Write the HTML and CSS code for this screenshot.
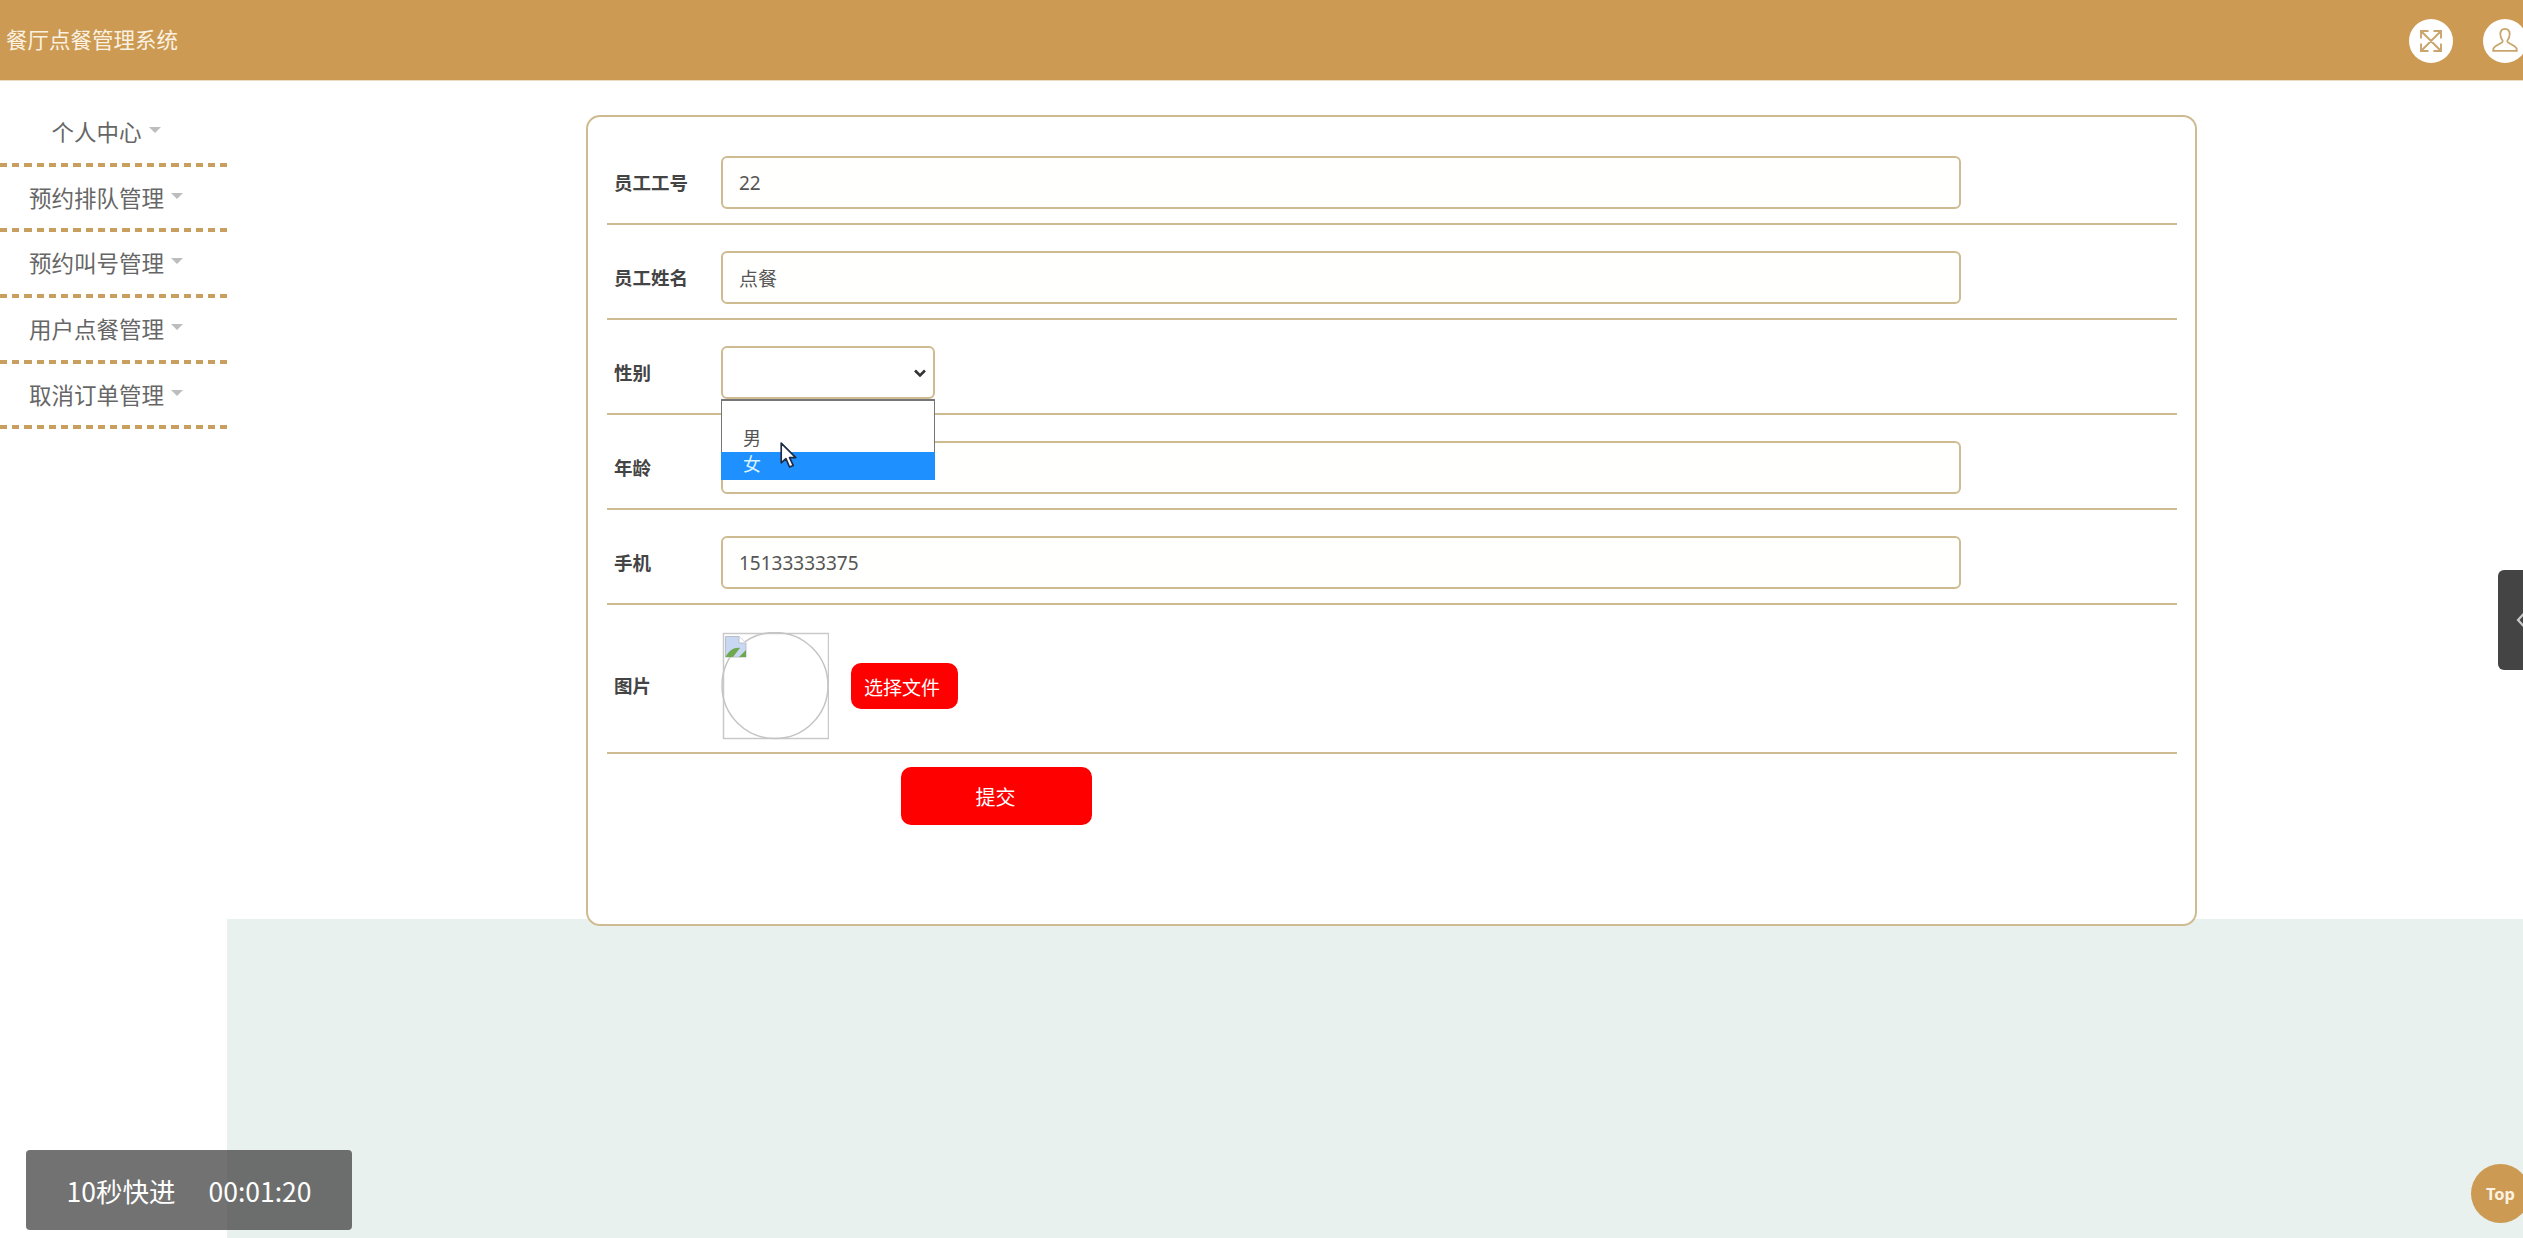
FILE: index.html
```html
<!DOCTYPE html>
<html lang="zh-CN">
<head>
<meta charset="utf-8">
<title>餐厅点餐管理系统</title>
<link rel="stylesheet" href="styles.css">
</head>
<body>
<header class="topbar">
  <div class="brand">餐厅点餐管理系统</div>
  <div class="top-actions">
    <span class="round-btn">
      <svg class="icon-expand" viewBox="0 0 24 24" fill="none" stroke="#c9a46c" stroke-width="1.500">
        <path d="M4 4 20 20M20 4 4 20M4 10V4H10M14 4H20V10M20 14V20H14M10 20H4V14"/>
      </svg>
    </span>
    <span class="round-btn">
      <svg class="icon-user" viewBox="0 0 24 24" fill="none" stroke="#c9a46c" stroke-width="1.500">
        <path d="M12 1.500C9.300 1.500 8 3.500 8 6.300C8 8.800 9 10.300 9.800 11.300C10.300 12 10 13 9 13.600L3.800 16.600C2.500 17.400 1.800 18.400 1.800 20.500H22.200C22.200 18.400 21.500 17.400 20.200 16.600L15 13.600C14 13 13.700 12 14.200 11.300C15 10.300 16 8.800 16 6.300C16 3.500 14.700 1.500 12 1.500Z"/>
      </svg>
    </span>
  </div>
</header>

<div class="layout">
  <nav class="sidebar">
    <div class="nav-item"><span>个人中心</span><i class="caret"></i></div>
    <div class="nav-item"><span>预约排队管理</span><i class="caret"></i></div>
    <div class="nav-item"><span>预约叫号管理</span><i class="caret"></i></div>
    <div class="nav-item"><span>用户点餐管理</span><i class="caret"></i></div>
    <div class="nav-item"><span>取消订单管理</span><i class="caret"></i></div>
  </nav>

  <main class="content">
    <form class="card">
      <div class="row">
        <label class="label">员工工号</label>
        <input class="field" type="text" value="22">
      </div>
      <div class="row">
        <label class="label">员工姓名</label>
        <input class="field" type="text" value="点餐">
      </div>
      <div class="row">
        <label class="label">性别</label>
        <div class="select-wrap">
          <select class="select"><option></option><option>男</option><option>女</option></select>
          <div class="dropdown">
            <div class="opt"></div>
            <div class="opt">男</div>
            <div class="opt opt-active">女</div>
            <svg class="cursor" viewBox="0 0 16 25">
              <path d="M1 1V20L5.500 16L9 24L12.500 22.500L9 15H15Z" fill="#fff" stroke="#1d2a44" stroke-width="1.600" stroke-linejoin="round"/>
            </svg>
          </div>
        </div>
      </div>
      <div class="row">
        <label class="label">年龄</label>
        <input class="field" type="text" value="">
      </div>
      <div class="row">
        <label class="label">手机</label>
        <input class="field" type="text" value="15133333375">
      </div>
      <div class="row row-photo">
        <label class="label">图片</label>
        <div class="photo">
          <svg class="photo-art" viewBox="0 0 108 108" fill="none">
            <rect x="2.500" y="1.500" width="105" height="105" stroke="#c9c9c9" stroke-width="1.500"/>
            <circle cx="54" cy="53.500" r="53" stroke="#c4c4c4" stroke-width="1.500"/>
            <path d="M4.500 4.500H18L25 11V25H4.500Z" fill="#c9d8f2" stroke="#b9bfc9"/>
            <path d="M18 4.500V11H25" fill="#fff" stroke="#b9bfc9"/>
            <path d="M4.500 25C8 18 14 15 19 16L12 25Z" fill="#6fa84f"/>
            <path d="M18 25 25 18V25Z" fill="#6fa84f"/>
          </svg>
        </div>
        <button class="pick" type="button">选择文件</button>
      </div>
      <button class="submit" type="button">提交</button>
    </form>
  </main>
</div>

<div class="speed-tag"><span>10秒快进</span><span>00:01:20</span></div>
<div class="side-handle">
  <svg class="side-arrow" viewBox="0 0 8 16" fill="none" stroke="#c9c9c9" stroke-width="2.200"><path d="M7 2 1.500 8 7 14"/></svg>
</div>
<div class="to-top">Top</div>
</body>
</html>
```

FILE: styles.css
```css
* { box-sizing: border-box; }

html, body {
  margin: 0;
  height: 100%;
  overflow: hidden;
}

body {
  position: relative;
  background: #fff;
  color: #555;
  font-family: "Noto Sans", "Noto Sans CJK SC", sans-serif;
}

.topbar {
  height: 81px;
  display: flex;
  align-items: center;
  justify-content: space-between;
  background: #cc9a52;
  border-bottom: 1px solid #ecdcc2;
  padding: 0 0 0 6px;
}

.brand {
  color: #fbf1e1;
  font-size: 21.500px;
  font-weight: 400;
  font-family: "Noto Sans CJK SC", sans-serif;
  margin-top: -4px;
}

.top-actions {
  display: flex;
  gap: 30px;
  margin-right: -4px;
  margin-top: 1px;
}

.round-btn {
  width: 44px;
  height: 44px;
  border-radius: 50%;
  background: #fff;
  display: flex;
  align-items: center;
  justify-content: center;
}

.icon-expand { width: 30px; height: 30px; flex: none; }
.icon-user { width: 28px; height: 28px; flex: none; }

.layout {
  display: flex;
  height: 1157px;
}

.sidebar {
  width: 227px;
  flex: none;
  padding-top: 20px;
  background: #fff;
}

.nav-item {
  height: 65.700px;
  display: flex;
  align-items: center;
  justify-content: center;
  gap: 7px;
  padding: 0 15px 6px 0;
  font-size: 22.500px;
  color: #666;
  font-family: "Noto Sans CJK SC", sans-serif;
  background: repeating-linear-gradient(90deg, #c99f5f 0 7px, transparent 7px 12.250px) bottom left / 100% 4px no-repeat;
}

.caret {
  width: 0;
  height: 0;
  margin-top: -2px;
  border-left: 6.500px solid transparent;
  border-right: 6.500px solid transparent;
  border-top: 6.500px solid #bdbdbd;
}

.content {
  flex: 1;
  padding: 34px 0 0 359px;
  background: linear-gradient(#fff 838px, #e8f1ee 838px);
}

.card {
  width: 1611px;
  height: 811px;
  padding: 13px 18px 0 19px;
  border: 2px solid #cfbb91;
  border-radius: 14px;
  background: #fff;
}

.row {
  display: flex;
  align-items: center;
  padding: 26px 0 14px 7px;
  border-bottom: 2px solid #cfbb91;
}

.row-photo {
  padding: 27px 0 12px 7px;
}

.label {
  width: 107px;
  flex: none;
  margin-bottom: 2px;
  font-size: 18.500px;
  font-weight: 700;
  color: #444;
  font-family: "Noto Sans CJK SC", sans-serif;
}

.field {
  width: 1240px;
  height: 53px;
  padding: 0 16px;
  border: 2px solid #cfbb91;
  border-radius: 6px;
  background: #fffffd;
  color: #555;
  font-size: 19px;
  font-family: "Noto Sans", "Noto Sans CJK SC", sans-serif;
  outline: none;
}

.select-wrap {
  position: relative;
  width: 214px;
  height: 53px;
}

.select {
  width: 100%;
  height: 100%;
  appearance: none;
  border: 2px solid #cfbb91;
  border-radius: 6px;
  background: #fff url("data:image/svg+xml,%3Csvg xmlns='http://www.w3.org/2000/svg' viewBox='0 0 14 10'%3E%3Cpath d='M2 2.500 7 7.500 12 2.500' fill='none' stroke='%23333' stroke-width='2.600'/%3E%3C/svg%3E") no-repeat right 6px center / 14px 10px;
  color: #555;
  font-size: 18px;
}

.dropdown {
  position: absolute;
  top: 53px;
  left: 0;
  width: 100%;
  height: 80px;
  z-index: 5;
  background: #fff;
  border: 1px solid #767676;
  border-top-width: 2px;
  font-size: 18px;
  font-family: "Noto Sans CJK SC", sans-serif;
}

.opt {
  height: 25px;
  line-height: 22px;
  padding-left: 21px;
  color: #555;
}

.opt:nth-child(2) { height: 26px; }

.opt-active {
  background: #1e90ff;
  color: #d9f2ff;
  height: 28px;
  margin: 0 -1px;
  padding-left: 22px;
}

.cursor {
  position: absolute;
  left: 58px;
  top: 41px;
  width: 17px;
  height: 26px;
}

.photo {
  width: 108px;
  height: 108px;
  flex: none;
}

.photo-art {
  display: block;
  width: 108px;
  height: 108px;
}

.pick {
  margin-left: 22px;
  width: 107px;
  height: 46px;
  padding: 0 5px 0 0;
  border: 0;
  border-radius: 10px;
  background: #f00;
  color: #fff;
  font-size: 19px;
  font-family: "Noto Sans CJK SC", sans-serif;
}

.submit {
  display: block;
  margin: 13px 0 0 294px;
  width: 191px;
  height: 58px;
  padding: 0 2px 0 0;
  border: 0;
  border-radius: 10px;
  background: #f00;
  color: #fff;
  font-size: 20px;
  font-family: "Noto Sans CJK SC", sans-serif;
}

.speed-tag {
  position: absolute;
  left: 26px;
  top: 1150px;
  width: 326px;
  height: 80px;
  display: flex;
  align-items: center;
  justify-content: center;
  gap: 33px;
  border-radius: 4px;
  background: rgba(60, 60, 60, 0.72);
  color: #fff;
  font-size: 26.500px;
  font-family: "Noto Sans CJK SC", sans-serif;
}

.side-handle {
  position: absolute;
  left: 2498px;
  top: 570px;
  width: 25px;
  height: 100px;
  background: #444;
  border-radius: 6px 0 0 6px;
  overflow: hidden;
}

.side-arrow {
  position: absolute;
  left: 18px;
  top: 42px;
  width: 9px;
  height: 16px;
}

.to-top {
  position: absolute;
  left: 2471px;
  top: 1164px;
  width: 59px;
  height: 59px;
  border-radius: 50%;
  background: #cc9a52;
  color: #fdf3e2;
  font-size: 16.500px;
  font-weight: 700;
  line-height: 59px;
  text-align: center;
}
```
